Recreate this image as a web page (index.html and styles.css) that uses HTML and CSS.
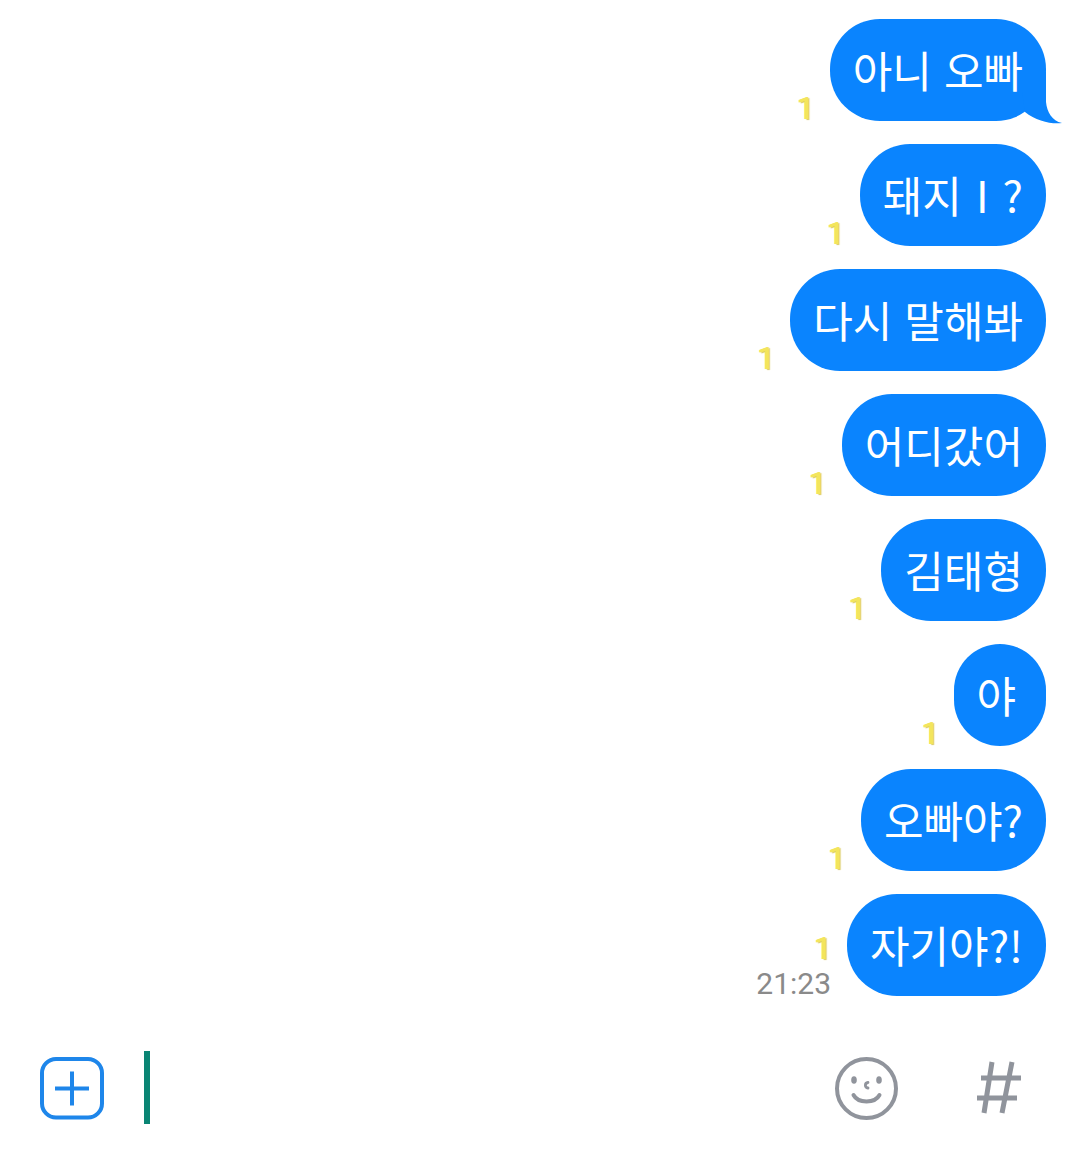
FILE: index.html
```html
<!DOCTYPE html>
<html lang="ko">
<head>
    <meta charset="UTF-8">
    <meta name="viewport" content="width=device-width, initial-scale=1.0">
    <title>Chat</title>
    <link rel="stylesheet" href="styles.css">
</head>
<body>
    <div class="messages">
        <div class="row">
            <div class="meta"><span class="unread">1</span></div>
            <div class="bubble">아니 오빠
                <svg class="tail" width="40" height="52" viewBox="0 0 40 52"><path d="M0 0 L24 0 L24 30 C25 40 30 49 40 51 C30 52.5 14 49 3 40 L0 20 Z"/></svg>
            </div>
        </div>
        <div class="row">
            <div class="meta"><span class="unread">1</span></div>
            <div class="bubble bubble-spaced">돼지 I ?</div>
        </div>
        <div class="row">
            <div class="meta"><span class="unread">1</span></div>
            <div class="bubble">다시 말해봐</div>
        </div>
        <div class="row">
            <div class="meta"><span class="unread">1</span></div>
            <div class="bubble">어디갔어</div>
        </div>
        <div class="row">
            <div class="meta"><span class="unread">1</span></div>
            <div class="bubble">김태형</div>
        </div>
        <div class="row">
            <div class="meta"><span class="unread">1</span></div>
            <div class="bubble bubble-single">야</div>
        </div>
        <div class="row">
            <div class="meta"><span class="unread">1</span></div>
            <div class="bubble">오빠야?</div>
        </div>
        <div class="row">
            <div class="meta"><span class="unread">1</span><span class="time">21:23</span></div>
            <div class="bubble">자기야?!</div>
        </div>
    </div>

    <div class="composer">
        <svg class="icon" width="64" height="63" viewBox="0 0 64 63" fill="none">
            <rect x="2" y="2" width="60" height="58.5" rx="14" stroke="#1e86ea" stroke-width="4"/>
            <path d="M15 31.5H49M32 14.5V48.5" stroke="#1e86ea" stroke-width="4"/>
        </svg>
        <div class="cursor"></div>
        <div class="spacer"></div>
        <svg class="icon" width="63" height="63" viewBox="0 0 63 63" fill="none" stroke="#90949c">
            <circle cx="31.5" cy="31.5" r="29.5" stroke-width="4"/>
            <ellipse cx="19" cy="23" rx="2.8" ry="3.8" fill="#90949c" stroke="none"/>
            <ellipse cx="44" cy="23" rx="2.8" ry="3.8" fill="#90949c" stroke="none"/>
            <path d="M33 25.5C29.5 26 29.5 30.5 33 31" stroke-width="2.8" stroke-linecap="round"/>
            <path d="M18.5 38C23 46.5 40 46.5 44.5 38" stroke-width="4" stroke-linecap="round"/>
        </svg>
        <svg class="icon-hash" width="46" height="53" viewBox="0 0 46 53" fill="none" stroke="#90949c" stroke-width="5">
            <path d="M16 1L8 52M36 1L26 52M5 17H45M1 37H41"/>
        </svg>
    </div>
</body>
</html>
```

FILE: styles.css
```css
body {
    margin: 0;
    width: 1080px;
    height: 1160px;
    background-color: #ffffff;
    font-family: "Roboto", "Noto Sans CJK KR", sans-serif;
    overflow: hidden;
}
.messages {
    display: flex;
    flex-direction: column;
    gap: 23px;
    padding: 19px 34px 0 0;
}
.row {
    display: flex;
    justify-content: flex-end;
    align-items: flex-end;
    gap: 16px;
}
.bubble {
    position: relative;
    height: 102px;
    line-height: 100px;
    padding: 0 23px;
    border-radius: 50px;
    background-color: #0a84fe;
    color: #ffffff;
    font-family: "Noto Sans CJK KR", sans-serif;
    font-size: 43px;
    white-space: nowrap;
}
.bubble-spaced {
    word-spacing: 2px;
}
.bubble-single {
    padding: 0 30px 0 22px;
}
.tail {
    position: absolute;
    right: -16px;
    bottom: -3px;
    fill: #0a84fe;
}
.meta {
    display: flex;
    flex-direction: column;
    align-items: flex-end;
}
.unread {
    font-size: 31px;
    line-height: 24px;
    color: #f3e55c;
    text-shadow: 1px 0 0 #f3e55c, 2px 1px 1px #d9c95a;
}
.time {
    margin-top: 10px;
    font-size: 30px;
    line-height: 25px;
    color: #8a8a8a;
}
.composer {
    display: flex;
    align-items: center;
    margin-top: 55px;
    padding: 0 58px 0 40px;
    height: 73px;
}
.icon {
    margin-top: 2px;
}
.cursor {
    width: 6px;
    height: 73px;
    margin-left: 40px;
    background-color: #0a8574;
}
.spacer {
    flex: 1;
}
.icon-hash {
    margin-left: 78px;
}
```
